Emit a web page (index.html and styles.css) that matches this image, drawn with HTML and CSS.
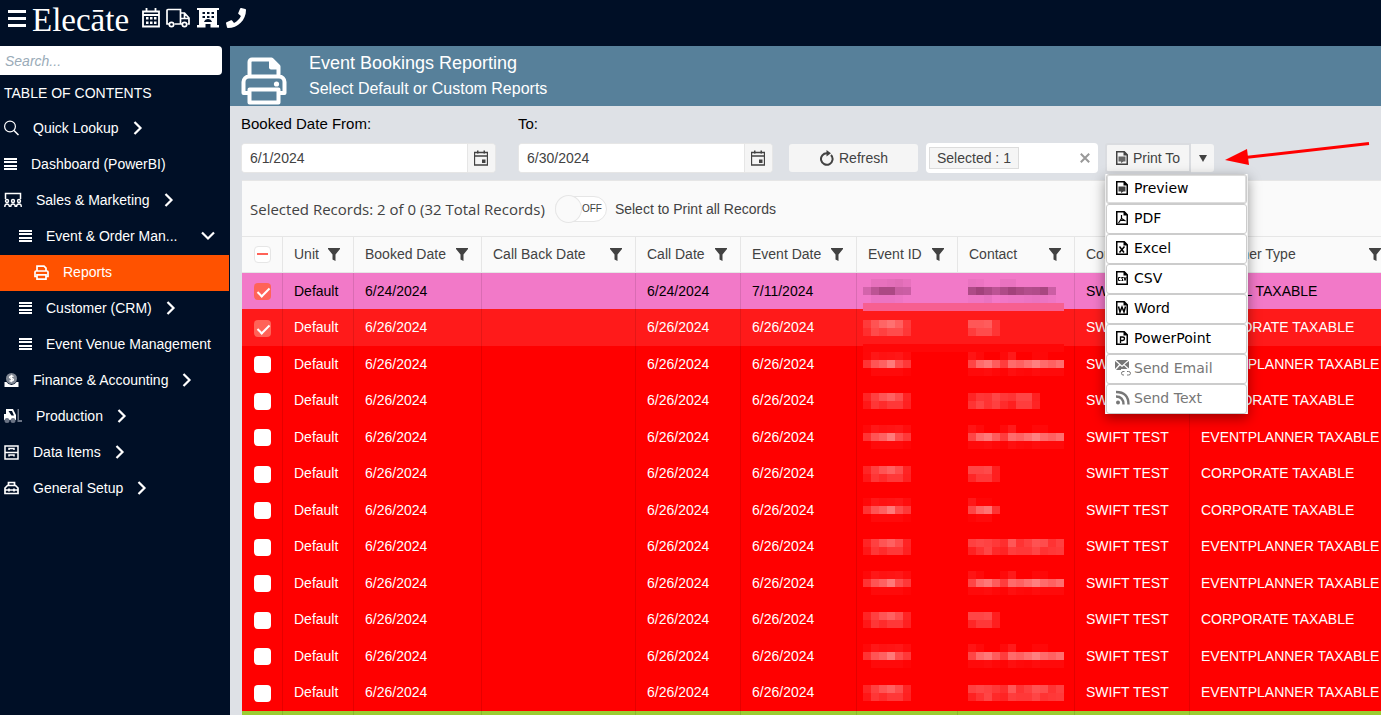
FILE: index.html
```html
<!DOCTYPE html>
<html lang="en">
<head>
<meta charset="utf-8">
<title>Event Bookings Reporting</title>
<link rel="stylesheet" href="styles.css">
</head>
<body>
<svg class="defs" aria-hidden="true">
  <symbol id="bars" viewBox="0 0 13 12"><path d="M0 0h13v2H0zM0 3h13v2H0zM0 7h13v2H0zM0 10h13v2H0z"/></symbol>
  <symbol id="chev" viewBox="0 0 10 14"><path d="M1.500 1l6 6-6 6" fill="none" stroke="currentColor" stroke-width="2.200"/></symbol>
  <symbol id="printer" viewBox="0 0 48 48"><path d="M9.500 19V5a2.500 2.500 0 0 1 2.500-2.500h19.500l7 7V19M9.500 36H3.500V25a5.500 5.500 0 0 1 5.500-5.500h30a5.500 5.500 0 0 1 5.500 5.500v11h-6M9.500 32.500h29v13h-29z" fill="none" stroke="currentColor" stroke-width="4" stroke-linejoin="round"/><path d="M29 2l10.500 10.500H31a2 2 0 0 1-2-2z"/><circle cx="36.500" cy="27" r="2.600"/></symbol>
  <symbol id="printer-sm" viewBox="0 0 15 15"><path d="M3 6V1.200h7L12 3.200V6M3 11.500H1V7q0-1 1-1h11q1 0 1 1v4.500h-2M3 9.800h9v4.300H3z" fill="none" stroke="currentColor" stroke-width="1.700"/></symbol>
  <symbol id="funnel" viewBox="0 0 12 13"><path d="M0 0h12v1L7.500 6.500V13L4.500 11.500v-5L0 1z"/></symbol>
  <symbol id="cal" viewBox="0 0 14 16"><path d="M.5 2.500h13v12.500H.5zM.5 6h13" fill="none" stroke="currentColor" stroke-width="1.300"/><path d="M3 .5h1.500v3H3zM9.500.5H11v3H9.500zM8 9.500h3.500V13H8z"/></symbol>
  <symbol id="file" viewBox="0 0 12 14"><path d="M.75.75h7.500l3 3v9.500H.75z" fill="none" stroke="currentColor" stroke-width="1.500"/><path d="M7.500 0v4.500H12z"/></symbol>
</svg>

<header class="topbar">
  <button class="icon-btn burger" aria-label="Toggle menu"><svg width="18" height="18" viewBox="0 0 18 18"><path d="M0 0h18v3H0zM0 7h18v3H0zM0 14h18v3H0z"/></svg></button>
  <span class="logo">Elecāte</span>
  <nav class="quick" aria-label="Shortcuts">
    <button class="icon-btn" aria-label="Calendar"><svg width="18" height="20" viewBox="0 0 18 20"><path d="M1 3.500h16v15H1zM1 7h16M4.500 0v4M13.500 0v4" fill="none" stroke="currentColor" stroke-width="1.800"/><path d="M4 9h2.500v2.500H4zM8 9h2.500v2.500H8zM12 9h2.500v2.500H12zM4 13.500h2.500V16H4zM8 13.500h2.500V16H8zM12 13.500h2.500V16H12z"/></svg></button>
    <button class="icon-btn" aria-label="Deliveries"><svg width="25" height="20" viewBox="0 0 25 20"><path d="M3 16H1V2.500q0-1 1-1h12.500V16H8.500M14.500 5h4l4.500 5v6h-1.500M14.500 16h1.500M14.500 10.500H23M18.500 5v5.500" fill="none" stroke="currentColor" stroke-width="1.700"/><circle cx="5.500" cy="16.500" r="2.200" fill="none" stroke="currentColor" stroke-width="1.700"/><circle cx="18.500" cy="16.500" r="2.200" fill="none" stroke="currentColor" stroke-width="1.700"/></svg></button>
    <button class="icon-btn" aria-label="Venues"><svg width="23" height="20" viewBox="0 0 23 20"><path fill-rule="evenodd" d="M0 0h22v2h-2v15h2v2.500h-8.500V16h-5v3.500H0V17h2V2H0zM5.500 4v2H8V4zM10 4v2h2.500V4zM14.500 4v2H17V4zM5.500 8v2H8V8zM10 8v2h2.500V8zM14.500 8v2H17V8zM7 14h8q-1-3-4-3t-4 3z"/></svg></button>
    <button class="icon-btn" aria-label="Call"><svg width="20" height="20" viewBox="0 0 512 512"><path d="M493 25L389 1c-11-3-23 3-27 14l-48 112c-4 10-1 21 7 28l61 50c-36 77-99 140-177 177l-50-61c-7-8-18-11-28-7L15 362c-11 4-17 16-14 27l24 104c2 11 12 19 23 19 256 0 464-207 464-464 0-11-8-21-19-23z"/></svg></button>
  </nav>
</header>

<div class="shell">
  <aside class="sidebar">
    <input class="search" type="search" placeholder="Search..." aria-label="Search">
    <h2 class="toc">TABLE OF CONTENTS</h2>
    <nav aria-label="Table of contents">
      <a class="item" href="#"><svg class="ic" width="15" height="16" viewBox="0 0 15 16"><circle cx="6" cy="6.500" r="5.400" fill="none" stroke="currentColor" stroke-width="1.200"/><path d="M10 10.500l4.500 4.500" stroke="currentColor" stroke-width="1.500"/></svg><span>Quick Lookup</span><svg class="chev"><use href="#chev"/></svg></a>
      <a class="item" href="#"><svg class="ic" width="13" height="12"><use href="#bars"/></svg><span>Dashboard (PowerBI)</span></a>
      <a class="item" href="#"><svg class="ic" width="18" height="16" viewBox="0 0 18 16"><path d="M1.500 7V1.500h15V7" fill="none" stroke="currentColor" stroke-width="1.500"/><g fill="none" stroke="currentColor" stroke-width="1.400"><circle cx="3" cy="9" r="1.500"/><circle cx="9" cy="9" r="1.500"/><circle cx="15" cy="9" r="1.500"/><path d="M.8 15q0-3 2.200-3t2.500 3M6.700 15q0-3 2.300-3t2.300 3M12.500 15q0-3 2.500-3t2.200 3"/></g></svg><span>Sales &amp; Marketing</span><svg class="chev"><use href="#chev"/></svg></a>
      <a class="item sub" href="#"><svg class="ic" width="13" height="12"><use href="#bars"/></svg><span>Event &amp; Order Man...</span><svg class="chev down"><use href="#chev"/></svg></a>
      <a class="item leaf active" href="#" aria-current="page"><svg class="ic" width="15" height="15"><use href="#printer-sm"/></svg><span>Reports</span></a>
      <a class="item sub" href="#"><svg class="ic" width="13" height="12"><use href="#bars"/></svg><span>Customer (CRM)</span><svg class="chev"><use href="#chev"/></svg></a>
      <a class="item sub" href="#"><svg class="ic" width="13" height="12"><use href="#bars"/></svg><span>Event Venue Management</span></a>
      <a class="item" href="#"><svg class="ic" width="15" height="14" viewBox="0 0 14 14"><circle cx="7" cy="5.500" r="5.500" opacity=".5"/><path d="M0 9h2q2 3 5 3t5-3h2v5H0z"/><path d="M9 3.500Q7 2.300 5.500 3.500T7 5.500t1.500 2T5 7.700M7 1.700v7.600" fill="none" stroke="currentColor" stroke-width="1.300"/></svg><span>Finance &amp; Accounting</span><svg class="chev"><use href="#chev"/></svg></a>
      <a class="item" href="#"><svg class="ic" width="18" height="14" viewBox="0 0 18 14"><path fill-rule="evenodd" d="M0 5h2V0h7l3 6v5H0zM4.500 2l3 4.500h2.500L8 2z"/><g fill="#6b7485"><circle cx="3" cy="11.500" r="2.500"/><circle cx="9" cy="11.500" r="2.500"/><path d="M13.500 0H15v11h3v2h-4.500z"/></g></svg><span>Production</span><svg class="chev"><use href="#chev"/></svg></a>
      <a class="item" href="#"><svg class="ic" width="15" height="15" viewBox="0 0 15 15"><path d="M1 1h13v13H1zM1 7.500h13M5 5V3.500h5V5M5 11.500V10h5v1.500" fill="none" stroke="currentColor" stroke-width="1.500"/></svg><span>Data Items</span><svg class="chev"><use href="#chev"/></svg></a>
      <a class="item" href="#"><svg class="ic" width="15" height="14" viewBox="0 0 15 14"><path d="M1 12.500V7l2.500-2.500h8L14 7v5.500zM1 9h13M4.500 4.500v-3h6v3M5 7.500v3M10 7.500v3" fill="none" stroke="currentColor" stroke-width="1.700"/></svg><span>General Setup</span><svg class="chev"><use href="#chev"/></svg></a>
    </nav>
  </aside>

  <main class="main">
    <div class="title">
      <svg width="48" height="48"><use href="#printer"/></svg>
      <div><h1>Event Bookings Reporting</h1><p>Select Default or Custom Reports</p></div>
    </div>

    <form class="filters">
      <div class="field">
        <label for="from">Booked Date From:</label>
        <div class="date"><input id="from" type="text" value="6/1/2024"><button type="button" aria-label="Open calendar"><svg width="14" height="16"><use href="#cal"/></svg></button></div>
      </div>
      <div class="field">
        <label for="to">To:</label>
        <div class="date"><input id="to" type="text" value="6/30/2024"><button type="button" aria-label="Open calendar"><svg width="14" height="16"><use href="#cal"/></svg></button></div>
      </div>
      <div class="actions">
        <button type="button" class="btn refresh"><svg width="15" height="16" viewBox="0 0 15 16"><path d="M12 5A5.800 5.800 0 1 1 8 3.200" fill="none" stroke="currentColor" stroke-width="2"/><path d="M7.500 0L12 3.300 7.500 6.500z"/></svg>Refresh</button>
        <div class="multi"><span class="tag">Selected : 1</span><button type="button" aria-label="Clear"><svg width="10" height="10" viewBox="0 0 10 10"><path d="M.8.8l8.400 8.400M9.200.8L.8 9.200" stroke="currentColor" stroke-width="2"/></svg></button></div>
        <div class="split">
          <button type="button" class="btn print"><svg width="12" height="14"><use href="#file"/><path d="M2.500 5.500h7v5H7.500L5 12v-1.500H2.500z" opacity=".8"/></svg>Print To</button>
          <button type="button" class="btn caret" aria-label="Print options"><svg width="8" height="7" viewBox="0 0 8 7"><path d="M0 0h8L4 7z"/></svg></button>
          <div class="menu" role="menu">
            <button type="button" role="menuitem" class="focused"><svg width="12" height="14"><use href="#file"/><path d="M2.500 5.500h7v5H7.500L5 12v-1.500H2.500z" opacity=".75"/></svg>Preview</button>
            <button type="button" role="menuitem"><svg width="12" height="14"><use href="#file"/><path d="M5.500 4v3.500L2.500 12M5.500 7.500l4 2.500M4 9.500h4" fill="none" stroke="currentColor" stroke-width="1.200"/></svg>PDF</button>
            <button type="button" role="menuitem"><svg width="12" height="14"><use href="#file"/><path d="M3.500 5.500L8 11.500M8.500 5.500l-5 6" fill="none" stroke="currentColor" stroke-width="1.500"/></svg>Excel</button>
            <button type="button" role="menuitem"><svg width="12" height="14"><use href="#file"/><path d="M4.500 6.500h-2v3h2M7.500 6.500h-2l1.500 3H5.500M8 6l1 3.500L10.200 6" fill="none" stroke="currentColor"/></svg>CSV</button>
            <button type="button" role="menuitem"><svg width="12" height="14"><use href="#file"/><path d="M2.500 5.500L4 11l2-5 2 5 1.500-5.500" fill="none" stroke="currentColor" stroke-width="1.500"/></svg>Word</button>
            <button type="button" role="menuitem"><svg width="12" height="14"><use href="#file"/><path d="M4.500 12V6h2q2 0 2 1.700T6.500 9.500h-2" fill="none" stroke="currentColor" stroke-width="1.300"/></svg>PowerPoint</button>
            <button type="button" role="menuitem" class="big" disabled><svg width="16" height="16" viewBox="0 0 16 16"><path d="M1 0h12L7 5.500zM0 1l4 3.500L0 9zM14 1v7.500L9.500 4.500zM1 10l4-4.500 2 1.500 2-1.500L12.500 9H6v1z"/><path d="M9 15H8q-1.500 0-1.500-1.700T8 11.500h1.500M12 11.500h1.500q2 0 2 1.800T13.500 15H12" fill="none" stroke="currentColor"/></svg>Send Email</button>
            <button type="button" role="menuitem" class="big" disabled><svg width="16" height="16" viewBox="0 0 16 16"><circle cx="3" cy="12.500" r="2"/><path d="M1 6.500q7.500 0 7.500 8M1 2q12.500 0 12.500 12.500" fill="none" stroke="currentColor" stroke-width="2.400"/></svg>Send Text</button>
          </div>
          <svg class="pointer" width="146" height="26" viewBox="0 0 146 26" aria-hidden="true"><path d="M20 15.500L144 1.500" stroke="#f00" stroke-width="3"/><path d="M0 18L22 7l2 16z" fill="#f00"/></svg>
        </div>
      </div>
    </form>

    <section class="grid">
      <div class="grid-bar">
        <span class="count">Selected Records: 2 of 0 (32 Total Records)</span>
        <label class="switch"><input type="checkbox" role="switch"><span class="track">OFF</span><span>Select to Print all Records</span></label>
      </div>
      <table>
        <colgroup><col class="c-check"><col class="c-unit"><col class="c-booked"><col class="c-back"><col class="c-call"><col class="c-event"><col class="c-id"><col class="c-contact"><col class="c-company"><col></colgroup>
        <thead><tr id="head"><th><input type="checkbox" class="mixed" aria-label="Select all"></th></tr></thead>
        <tbody id="rows"></tbody>
      </table>
    </section>
  </main>
</div>
<script src="script.js"></script>
</body>
</html>
```
FILE: styles.css
```css
* { box-sizing: border-box; }
body {
  margin: 0; height: 100vh; overflow: hidden; display: flex; flex-direction: column;
  font: 14px/18px "Liberation Sans", Arial, sans-serif; color: #424242; background: #dee1e6;
}
button, input { font: inherit; color: inherit; margin: 0; }
button { cursor: pointer; }
svg { fill: currentColor; flex: none; }
.defs { position: absolute; width: 0; height: 0; }
h1, h2, p { margin: 0; font-weight: normal; }

.topbar { height: 46px; flex: none; display: flex; align-items: flex-start; padding: 0 8px; background: #000f26; color: #fff; }
.icon-btn { border: 0; background: none; padding: 0; display: flex; }
.burger { padding-top: 10px; }
.logo { font: 33px/40px "Liberation Serif", serif; margin-left: 6px; }
.quick { display: flex; gap: 6px; padding: 8px 0 0 13px; }

.shell { flex: 1; min-height: 0; display: flex; }
.sidebar { width: 230px; flex: none; background: #000f26; color: #fff; overflow: hidden; }
.search {
  display: block; width: 222px; height: 29px; border: 0; padding: 0 5px; appearance: none;
  background: #fff; border-radius: 0 4px 4px 0; color: #424242;
}
.search::placeholder { color: #9aabb8; font-style: italic; opacity: 1; }
.toc { font-size: 14px; line-height: 18px; padding: 9px 4px; }
.item { display: flex; align-items: center; height: 36px; padding: 0 0 2px 4px; margin-right: 1px; color: #fff; text-decoration: none; white-space: nowrap; }
.item .ic { margin-right: 14px; }
.item.sub { padding-left: 19px; }
.item.leaf { padding-left: 34px; }
.active { background: #ff5200; }
.chev { width: 10px; height: 14px; margin-left: 14px; }
.chev.down { transform: rotate(90deg); margin-left: auto; margin-right: 16px; }

.main { flex: 1; min-width: 0; display: flex; flex-direction: column; }
.title { height: 60px; flex: none; display: flex; gap: 21px; padding: 11px 10px 0; background: #57809a; color: #fff; }
.title div { margin-top: -5px; }
.title h1 { font-size: 18px; line-height: 22px; }
.title p { font-size: 16px; line-height: 30px; }

.filters { display: flex; align-items: flex-end; gap: 22px; padding: 9px 11px 7px; color: #000; }
.field { display: flex; flex-direction: column; gap: 10px; }
.field label { font-size: 15px; }
.date { display: flex; width: 255px; height: 30px; border: 1px solid #e6e6e6; border-radius: 4px; overflow: hidden; background: #f5f5f5; color: #424242; }
.date input { flex: 1; min-width: 0; border: 0; padding: 0 8px; background: #fff; }
.date button { width: 28px; border: 0; border-left: 1px solid #e6e6e6; padding: 0 6px; background: #f5f5f5; display: flex; align-items: center; }
.actions { display: flex; gap: 8px; align-items: center; height: 30px; margin-left: -6px; color: #424242; }
.btn { display: flex; align-items: center; justify-content: center; height: 28px; border: 0; background: #f5f5f5; border-radius: 3px; padding: 0; }
.refresh { width: 129px; gap: 5px; }
.multi { display: flex; align-items: center; justify-content: space-between; width: 172px; height: 30px; padding: 0 8px 0 3px; background: #fff; border-radius: 4px; }
.tag { background: #f5f5f5; border: 1px solid #dcdcdc; padding: 1px 7px; line-height: 18px; }
.multi button { border: 0; background: none; padding: 0; color: #999; display: flex; }
.split { display: flex; position: relative; align-items: center; margin-left: -1px; }
.print { width: 86px; height: 30px; gap: 5px; border: 2px solid #dadce0; border-radius: 3px 0 0 3px; }
.caret { width: 23px; border-radius: 0 3px 3px 0; }
.menu {
  position: absolute; z-index: 2; left: 0; top: 31px; width: 143px; background: #fff;
  border: 1px solid #eee; border-width: 0 1px; box-shadow: 0 4px 12px rgba(0, 0, 0, .4);
}
.menu button {
  display: flex; align-items: center; gap: 6px; width: 100%; height: 30px; padding: 0 9px 2px;
  border: 1px solid #ccc; border-radius: 3px; background: #fff; color: #000;
  font: 14px/18px "DejaVu Sans", sans-serif; text-align: left;
}
.menu .focused { box-shadow: inset 0 0 0 1px #ddd; }
.menu .big { padding: 0 8px 2px; gap: 3px; }
.menu button:disabled { color: #777; }
.pointer { position: absolute; z-index: 3; left: 120px; top: -1px; }

.grid { flex: 1; min-height: 0; margin-left: 12px; overflow: hidden; background: #fafafa; border-top: 1px solid #e6e6e6; }
.grid-bar { display: flex; align-items: center; gap: 10px; height: 55px; padding-left: 8px; }
.count { font: 15px/24px "Open Sans", "Noto Sans", sans-serif; }
.switch { display: flex; align-items: center; gap: 8px; }
.switch input { position: absolute; opacity: 0; }
.track { display: flex; align-items: center; justify-content: space-between; width: 52px; height: 26px; padding-right: 4px; border: 1px solid #e6e6e6; border-radius: 13px; background: #fff; font-size: 10px; }
.track::before { content: ""; width: 26px; height: 26px; margin-left: -1px; border: 1px solid #e6e6e6; border-radius: 50%; background: #fafafa; }

table { table-layout: fixed; width: 100%; min-width: 1153px; border-collapse: separate; border-spacing: 0; }
.c-check { width: 41px; } .c-unit { width: 71px; } .c-booked { width: 128px; } .c-back { width: 154px; }
.c-call { width: 105px; } .c-event { width: 116px; } .c-id { width: 101px; } .c-contact { width: 117px; } .c-company { width: 115px; }
th, td { padding: 0 0 0 11px; text-align: left; font-weight: normal; white-space: nowrap; vertical-align: middle; line-height: 18px; }
th { height: 37px; border: solid #e6e6e6; border-width: 1px 1px 1px 0; padding-bottom: 1px; }
.th { display: flex; align-items: center; justify-content: space-between; padding-right: 13px; }
td { height: 36px; border-right: 1px solid rgba(0, 0, 0, .1); }
tr:nth-child(even) td { height: 37px; padding-bottom: 1px; }
.red { background: #f00; color: #fff; }
.pink { background: #f279c8; color: #000; }
.picked { background: #ff1a1a; color: #fff; }
.green { background: #9acd32; }
td.id { position: relative; padding-left: 6px; border-right-color: transparent; }
td.contact { padding-left: 10px; }
tr:nth-child(even) td.id, tr:nth-child(even) td.contact { padding-top: 1px; padding-bottom: 0; }
td:first-child { padding-top: 1px; }
tr:nth-child(even) td:first-child { padding-top: 2px; padding-bottom: 0; }
td svg { display: block; }
.pink .id::after, .picked .id::after { content: ""; position: absolute; z-index: 1; left: 6px; bottom: -2px; width: 201px; height: 8px; background: #f75f90; }
.picked .id::after { bottom: -6px; background: #ff0707; }

table input { appearance: none; display: block; width: 17px; height: 17px; margin-left: 1px; border-radius: 4px; background: #fff; position: relative; }
table input.mixed { border: 1px solid #e6e6e6; }
table input.mixed::after { content: ""; position: absolute; left: 2px; top: 6px; width: 11px; height: 2px; background: #ff6358; }
table input:checked { background: #ff6358; }
table input:checked::after { content: ""; position: absolute; left: 6px; top: 2px; width: 5px; height: 10px; border: solid #fff; border-width: 0 2px 2px 0; transform: rotate(45deg); }
```
FILE: script.js
```js
// Masked values are drawn as 8px blocks; each number is the block's strength in percent.
const idOdd = [[3, 9, 7, 8, 9, 5], [20, 33, 38, 48, 30, 22], [0, 4, 4, 4, 4, 2]];
const idEven = [[14, 25, 33, 38, 30, 14], [9, 21, 17, 22, 22, 13]];
const idPink = [[0, 10, 10, 13, 16, 10], [28, 50, 65, 65, 38, 35], [0, 6, 6, 6, 4, 0]];
const longOdd = [[8, 4, 0, 0, 4, 10, 0, 0, 3, 3, 0, 0], [27, 42, 47, 36, 24, 42, 38, 44, 50, 42, 38, 43], [4, 4, 5, 3, 2, 6, 4, 3, 5, 4, 4, 4]];
const longEven = [[25, 28, 26, 22, 18, 34, 20, 25, 32, 30, 20, 25], [13, 20, 27, 16, 14, 24, 22, 22, 27, 20, 22, 23]];
const shortEven = [[27, 27, 29, 12], [15, 22, 22, 12]];
const shortOdd = [[9, 2, 2, 0], [27, 40, 45, 20], [2, 4, 4, 0]];
const midEven = [[14, 21, 20, 27, 22, 20, 27, 27, 13], [20, 27, 20, 25, 17, 12, 24, 24, 14]];
const contactPink = [[7, 5, 0, 0, 8, 8, 0, 0, 0, 0, 0], [62, 74, 62, 50, 62, 74, 65, 58, 60, 68, 35], [3, 3, 8, 0, 2, 4, 4, 6, 8, 6, 3]];

const C = "CORPORATE TAXABLE", E = "EVENTPLANNER TAXABLE";
const rows = [
  ["pink", "6/24/2024", "7/11/2024", contactPink, "SOCIAL TAXABLE"],
  ["picked", "6/26/2024", "6/26/2024", shortEven, C],
  ["red", "6/26/2024", "6/26/2024", longOdd, E],
  ["red", "6/26/2024", "6/26/2024", midEven, C],
  ["red", "6/26/2024", "6/26/2024", longOdd, E],
  ["red", "6/26/2024", "6/26/2024", shortEven, C],
  ["red", "6/26/2024", "6/26/2024", shortOdd, C],
  ["red", "6/26/2024", "6/26/2024", longEven, E],
  ["red", "6/26/2024", "6/26/2024", longOdd, E],
  ["red", "6/26/2024", "6/26/2024", shortEven, C],
  ["red", "6/26/2024", "6/26/2024", longOdd, E],
  ["red", "6/26/2024", "6/26/2024", longEven, E]
];

function mask(cells, fill) {
  const rects = cells.map((line, y) => line.map((v, x) =>
    v ? `<rect x="${x * 8}" y="${y * 8}" width="8" height="8" fill-opacity="${v / 100}"/>` : "").join("")).join("");
  return `<svg width="${cells[0].length * 8}" height="${cells.length * 8}" style="fill:${fill}" shape-rendering="crispEdges" role="img" aria-label="Hidden value">${rects}</svg>`;
}

const titles = ["Unit", "Booked Date", "Call Back Date", "Call Date", "Event Date", "Event ID", "Contact", "Company", "Customer Type"];
document.getElementById("head").insertAdjacentHTML("beforeend", titles.map(t =>
  `<th><div class="th">${t}<svg width="12" height="13" aria-hidden="true"><use href="#funnel"/></svg></div></th>`).join(""));

document.getElementById("rows").innerHTML = rows.map(([kind, booked, event, contact, type], i) => {
  const fill = kind === "pink" ? "#852f60" : "#fff";
  const id = kind === "pink" ? idPink : i % 2 ? idEven : idOdd;
  return `<tr class="${kind}"><td><input type="checkbox" aria-label="Select row ${i + 1}"${i < 2 ? " checked" : ""}></td>
    <td>Default</td><td>${booked}</td><td></td><td>${booked}</td><td>${event}</td>
    <td class="id">${mask(id, fill)}</td><td class="contact">${mask(contact, fill)}</td><td>SWIFT TEST</td><td>${type}</td></tr>`;
}).join("") + `<tr class="green">${"<td></td>".repeat(10)}</tr>`;
```
